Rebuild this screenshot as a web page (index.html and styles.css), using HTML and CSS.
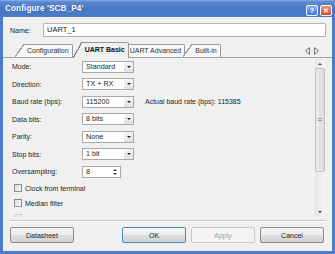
FILE: index.html
```html
<!DOCTYPE html>
<html lang="en">
<head>
  <meta charset="UTF-8" />
  <title>Configure 'SCB_P4'</title>
  <link rel="stylesheet" href="styles.css">
</head>
<body>
  <div class="window">
    <div class="titlebar">
      <span class="title">Configure 'SCB_P4'</span>
      <span class="tb-buttons">
        <span class="tb-btn help">?</span>
        <span class="tb-btn close">&#x2715;</span>
      </span>
    </div>

    <div class="body">
      <div class="name-row">
        <span class="name-label">Name:</span>
        <div class="textbox">UART_1</div>
      </div>

      <div class="tabs">
        <span class="tab">Configuration</span>
        <span class="tab active">UART Basic</span>
        <span class="tab">UART Advanced</span>
        <span class="tab">Built-in</span>
        <span class="tab-arrows">
          <svg width="16" height="8" viewBox="0 0 16 8">
            <path d="M5.5 0.5 L1.5 4 L5.5 7.5 Z" fill="#e8e8e8" stroke="#777" stroke-width="1"/>
            <path d="M10.5 0.5 L14.5 4 L10.5 7.5 Z" fill="#e8e8e8" stroke="#777" stroke-width="1"/>
          </svg>
        </span>
      </div>

      <div class="panel">
        <div class="form">
          <div class="field">
            <span class="label">Mode:</span>
            <div class="combo"><span>Standard</span><i class="drop"></i></div>
          </div>
          <div class="field">
            <span class="label">Direction:</span>
            <div class="combo"><span>TX + RX</span><i class="drop"></i></div>
          </div>
          <div class="field">
            <span class="label">Baud rate (bps):</span>
            <div class="combo"><span>115200</span><i class="drop"></i></div>
            <span class="note">Actual baud rate (bps): 115385</span>
          </div>
          <div class="field">
            <span class="label">Data bits:</span>
            <div class="combo"><span>8 bits</span><i class="drop"></i></div>
          </div>
          <div class="field">
            <span class="label">Parity:</span>
            <div class="combo"><span>None</span><i class="drop"></i></div>
          </div>
          <div class="field">
            <span class="label">Stop bits:</span>
            <div class="combo"><span>1 bit</span><i class="drop"></i></div>
          </div>
          <div class="field">
            <span class="label">Oversampling:</span>
            <div class="spin"><span>8</span><i class="spin-arrows"></i></div>
          </div>

          <label class="check"><i class="box"></i>Clock from terminal</label>
          <label class="check"><i class="box"></i>Median filter</label>
          <div class="check faded"><i class="box"></i></div>
        </div>

        <div class="scrollbar">
          <span class="sb-arrow up"></span>
          <div class="sb-track">
            <div class="sb-thumb"><span class="grip"></span></div>
          </div>
          <span class="sb-arrow down"></span>
        </div>
      </div>

      <div class="separator"></div>

      <div class="footer">
        <button class="btn">Datasheet</button>
        <span class="spacer"></span>
        <button class="btn default">OK</button>
        <button class="btn" disabled>Apply</button>
        <button class="btn">Cancel</button>
      </div>
    </div>
  </div>
</body>
</html>
```

FILE: styles.css
```css
body {
  margin: 0;
  font-family: "Liberation Sans", Arial, sans-serif;
  font-size: 7px;
  color: #1e1e1e;
  background: #fff;
}
.window {
  width: 335px;
  height: 254px;
  box-sizing: border-box;
  padding: 0 3px 3px;
  display: flex;
  flex-direction: column;
  background: linear-gradient(#86aee6 0, #5a88d0 2px, #4778c6 9px, #4a7cc9 17px, #4b7dca 100%);
}
.titlebar {
  height: 17px;
  flex: none;
  display: flex;
  align-items: center;
  justify-content: space-between;
  padding-left: 2px;
  color: #fff;
  font-weight: bold;
  font-size: 8.2px;
  letter-spacing: 0.1px;
}
.title {
  text-shadow: 0 0 1px #2b4f90;
}
.tb-buttons {
  display: flex;
  gap: 2px;
  margin-top: 4px;
}
.tb-btn {
  width: 10px;
  height: 9px;
  border-radius: 2px;
  color: #fff;
  font-size: 7px;
  line-height: 9px;
  text-align: center;
  border: 1px solid #fff;
}
.help {
  background: linear-gradient(#7fb0f0, #3f7ee0);
}
.close {
  background: linear-gradient(#f0967a, #d9482a);
}

.body {
  flex: 1;
  background: #f0f0f0;
  display: flex;
  flex-direction: column;
  padding-bottom: 8px;
}

/* name */
.name-row {
  display: flex;
  align-items: center;
  margin: 6px 6px 0 7px;
  height: 14px;
}
.name-label {
  width: 33px;
}
.textbox {
  flex: 1;
  height: 14px;
  box-sizing: border-box;
  border: 1px solid #b4b4b4;
  border-radius: 1px;
  background: #fff;
  padding-left: 3px;
  line-height: 12px;
  font-size: 7.5px;
}

/* tabs */
.tabs {
  display: flex;
  align-items: flex-end;
  height: 15px;
  margin-top: 6px;
  padding-left: 12px;
  border-bottom: 1px solid #a3a3a3;
  box-sizing: border-box;
}
.tab {
  position: relative;
  height: 12px;
  line-height: 12px;
  margin-left: 9px;
  padding: 0 3px;
  background: #f7f7f7;
  border-top: 1px solid #9a9a9a;
  border-right: 1px solid #9a9a9a;
  border-top-right-radius: 2px;
  white-space: nowrap;
  color: #333;
}
.tab::before {
  content: "";
  position: absolute;
  left: -9px;
  top: -1px;
  bottom: 0;
  width: 9px;
  background: linear-gradient(to bottom right, transparent 46%, #9a9a9a 46%, #9a9a9a 54%, #f7f7f7 54%);
}
.tab.active {
  z-index: 2;
  height: 15px;
  line-height: 14px;
  margin-bottom: -1px;
  font-weight: bold;
  color: #111;
  background: #f0f0f0;
}
.tab.active::before {
  background: linear-gradient(to bottom right, transparent 46%, #8a8a8a 46%, #8a8a8a 54%, #f0f0f0 54%);
}
.tab.active + .tab {
  margin-left: -2px;
}
.tab.active + .tab::before {
  display: none;
}
.tab.active + .tab + .tab {
  margin-left: 7px;
}
.tab-arrows {
  margin-left: auto;
  margin-right: 12px;
  align-self: center;
  height: 8px;
  margin-top: 1px;
}
.tab-arrows svg {
  display: block;
}

/* panel */
.panel {
  height: 159px;
  flex: none;
  display: flex;
  overflow: hidden;
}
.form {
  flex: 1;
  padding-left: 9px;
}
.field {
  height: 17.5px;
  display: flex;
  align-items: center;
}
.label {
  width: 70px;
  flex: none;
}
.combo, .spin {
  position: relative;
  width: 52px;
  height: 12px;
  box-sizing: border-box;
  border: 1px solid #a9a9a9;
  background: #fff;
  padding-left: 3px;
  line-height: 10px;
  font-size: 7.2px;
}
.spin {
  width: 39px;
}
.drop {
  position: absolute;
  right: 0;
  top: 0;
  width: 9px;
  height: 10px;
  background: linear-gradient(#f6f6f6, #e2e2e2);
}
.drop::after {
  content: "";
  position: absolute;
  left: 3px;
  top: 4px;
  border-left: 2px solid transparent;
  border-right: 2px solid transparent;
  border-top: 2px solid #222;
}
.spin-arrows {
  position: absolute;
  right: 1px;
  top: 0;
  width: 8px;
  height: 10px;
}
.spin-arrows::before, .spin-arrows::after {
  content: "";
  position: absolute;
  left: 2px;
  border-left: 2px solid transparent;
  border-right: 2px solid transparent;
}
.spin-arrows::before {
  top: 2px;
  border-bottom: 2px solid #333;
}
.spin-arrows::after {
  top: 6px;
  border-top: 2px solid #333;
}
.note {
  margin-left: 11px;
  white-space: nowrap;
}
.check {
  height: 15px;
  display: flex;
  align-items: center;
  padding-left: 2px;
}
.check.faded .box {
  opacity: 0.35;
}
.box {
  width: 8px;
  height: 8px;
  box-sizing: border-box;
  border: 1px solid #8e8f8f;
  background: linear-gradient(135deg, #dcdcdc, #fbfbfb);
  margin-right: 3px;
}

/* scrollbar */
.scrollbar {
  width: 10px;
  margin: 2px 7px 1px 0;
  display: flex;
  flex-direction: column;
  background: linear-gradient(90deg, #e6e6e6, #f4f4f4);
}
.sb-arrow {
  height: 8px;
  position: relative;
  flex: none;
}
.sb-arrow::after {
  content: "";
  position: absolute;
  left: 3px;
  top: 3px;
  border-left: 2px solid transparent;
  border-right: 2px solid transparent;
}
.sb-arrow.up::after {
  border-bottom: 2px solid #444;
}
.sb-arrow.down::after {
  border-top: 2px solid #444;
}
.sb-track {
  flex: 1;
}
.sb-thumb {
  height: 104px;
  box-sizing: border-box;
  border: 1px solid #c2c2c2;
  border-radius: 2px;
  background: linear-gradient(90deg, #ececec, #dcdcdc);
  display: flex;
  align-items: center;
  justify-content: center;
}
.grip {
  width: 4px;
  height: 4px;
  background: repeating-linear-gradient(#777 0 1px, transparent 1px 2px);
  opacity: 0.7;
}

/* footer */
.separator {
  height: 1px;
  margin: 3px 7px 0;
  background: #c8c8c8;
  border-bottom: 1px solid #fff;
}
.footer {
  display: flex;
  gap: 5px;
  margin: 5px 8px 0 7px;
}
.spacer {
  flex: 1;
}
.btn {
  width: 64px;
  height: 16px;
  padding: 0;
  font-family: inherit;
  font-size: 7px;
  color: #1e1e1e;
  border: 1px solid #8a8a8a;
  border-radius: 2px;
  background: linear-gradient(#f6f6f6 0, #ebebeb 50%, #dedede 50%, #d4d4d4 100%);
}
.btn.default {
  border-color: #4f86b8;
}
.btn:disabled {
  color: #a6a6a6;
  border-color: #c9c9c9;
  background: #f4f4f4;
}
```
